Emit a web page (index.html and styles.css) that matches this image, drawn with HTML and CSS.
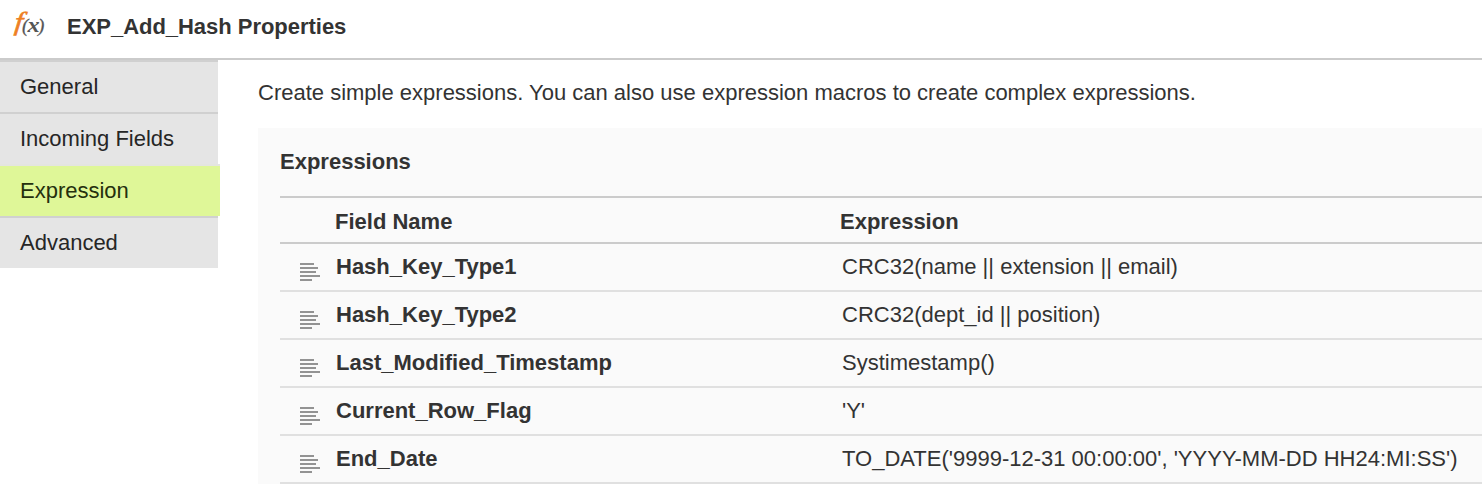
FILE: index.html
```html
<!DOCTYPE html>
<html lang="en">
<head>
<meta charset="utf-8">
<title>EXP_Add_Hash Properties</title>
<link rel="stylesheet" href="styles.css">
</head>
<body>
<svg class="defs" width="0" height="0" aria-hidden="true">
  <symbol id="lines" viewBox="0 0 20 18">
    <path d="M0 1h14M0 5h18M0 9h16M0 13h20M0 17h12" stroke="#939393" stroke-width="2" fill="none"/>
  </symbol>
</svg>
<header class="header">
  <svg class="fx" width="45" height="44" viewBox="0 0 45 44">
    <text class="fx-f" transform="translate(14 29.700) skewX(-6) scale(1.15 1)">f</text>
    <text class="fx-p" x="22" y="32">(</text>
    <text class="fx-x" transform="translate(27.500 32) scale(1.1 1)">x</text>
    <text class="fx-p" x="38" y="32">)</text>
  </svg>
  <h1 class="title">EXP_Add_Hash Properties</h1>
</header>
<div class="body">
  <nav class="tabs">
    <a class="tab">General</a>
    <a class="tab">Incoming Fields</a>
    <a class="tab active">Expression</a>
    <a class="tab">Advanced</a>
  </nav>
  <main class="main">
    <p class="intro">Create simple expressions. You can also use expression macros to create complex expressions.</p>
    <section class="panel">
      <h2 class="panel-title">Expressions</h2>
      <div class="row head"><span class="name">Field Name</span><span class="expr">Expression</span></div>
      <div class="row"><svg class="icon"><use href="#lines"/></svg><span class="name">Hash_Key_Type1</span><span class="expr">CRC32(name || extension || email)</span></div>
      <div class="row"><svg class="icon"><use href="#lines"/></svg><span class="name">Hash_Key_Type2</span><span class="expr">CRC32(dept_id || position)</span></div>
      <div class="row"><svg class="icon"><use href="#lines"/></svg><span class="name">Last_Modified_Timestamp</span><span class="expr">Systimestamp()</span></div>
      <div class="row"><svg class="icon"><use href="#lines"/></svg><span class="name">Current_Row_Flag</span><span class="expr">'Y'</span></div>
      <div class="row"><svg class="icon"><use href="#lines"/></svg><span class="name">End_Date</span><span class="expr">TO_DATE('9999-12-31 00:00:00', 'YYYY-MM-DD HH24:MI:SS')</span></div>
    </section>
  </main>
</div>
</body>
</html>
```
FILE: styles.css
```css
* { box-sizing: border-box; }
body {
  margin: 0;
  height: 485px;
  overflow: hidden;
  background: #fff;
  color: #333;
  font: 22px/26px "Liberation Sans", Arial, sans-serif;
  white-space: nowrap;
}
.defs { display: none; }
.header {
  display: flex;
  height: 60px;
  border-bottom: 2px solid #cbcbcb;
}
.fx {
  flex: none;
  margin-right: 22px;
  overflow: visible;
  font-family: "Liberation Serif", serif;
  font-style: italic;
}
.fx-f { font-size: 26px; fill: #ee8024; stroke: #ee8024; stroke-width: 0.6px; }
.fx-p { font-size: 19px; fill: #555; stroke: #555; stroke-width: 0.3px; }
.fx-x { font-size: 22px; font-weight: bold; fill: #555; }
.title { margin: 14px 0 0; font-size: 22px; line-height: 26px; letter-spacing: -0.03px; }
.body { display: flex; }
.tabs { width: 220px; height: 208px; display: flex; flex-direction: column; }
.tab {
  width: 218px;
  height: 52px;
  padding: 12px 20px 0;
  border-top: 2px solid #d0d0d0;
  background: #e5e5e5;
  color: #262626;
}
.tab.active { width: 220px; background: #dff798; border-color: #e4e5e0; color: #25300d; }
.main { flex: 1; min-width: 0; padding: 20px 0 0 38px; }
.intro { margin: 0 0 22px; }
.panel { height: 356px; padding-left: 22px; background: #fafafa; }
.panel-title { margin: 0; height: 68px; padding-top: 21px; font-size: 22px; line-height: 26px; }
.row { display: flex; height: 48px; padding: 10px 0 0 20px; border-bottom: 2px solid #e0e0e0; }
.head { padding: 11px 0 0 35px; border-top: 2px solid #cbcbcb; border-bottom-color: #cbcbcb; font-weight: bold; }
.icon { width: 20px; height: 18px; margin: 9px 16px 0 0; flex: none; }
.name { width: 506px; font-weight: bold; }
.head .name { width: 525px; padding-left: 20px; }
```
